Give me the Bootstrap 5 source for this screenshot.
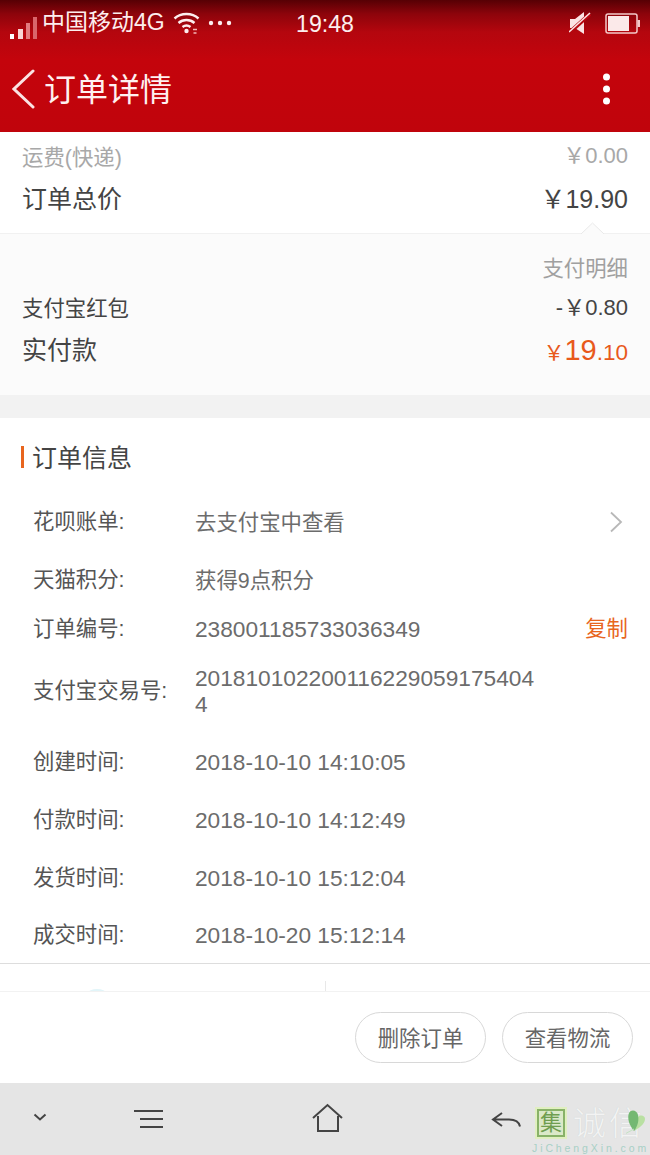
<!DOCTYPE html>
<html lang="zh-CN">
  <head>
    <meta charset="UTF-8" />
    <meta name="viewport" content="width=device-width, initial-scale=1.0" />
    <title>订单详情</title>
    <link href="https://cdn.jsdelivr.net/npm/bootstrap@5.3.0/dist/css/bootstrap.min.css" rel="stylesheet" />
    <style>
      body { width: 650px; height: 1155px; overflow: hidden; background: #fff; color: #444; position: relative;
        font-family: "Liberation Sans", "Noto Sans CJK SC", sans-serif; font-size: 21.4px; line-height: 1.2; }
      .top-red { height: 132px; background: linear-gradient(180deg, #560004 0, #8d040b 14px, #b4060e 32px, #c4040c 60px, #c0040c 100%); color: #fdeeee; }
      .status-row { height: 46px; padding: 0 10px 0 10px; font-size: 23px; }
      .status-right { gap: 14px; }
      .status-time { position: absolute; left: 0; right: 0; top: 11px; text-align: center; font-size: 23.2px; }
      .head-row { height: 86px; padding: 0 39px 0 12px; }
      .head-title { font-size: 32px; margin-left: 8px; margin-top: 2px; color: #fff0f0; }
      .fee-block { height: 102px; border-bottom: 1px solid #f1f1f1; padding: 14px 22px 0; }
      .fee-line { height: 25px; color: #a8a8a8; }
      .total-line { height: 30px; margin-top: 13px; font-size: 25px; color: #444; }
      .pay-block { height: 161px; background: #fbfbfb; padding: 23px 22px 0; position: relative; }
      .pay-arrow { position: absolute; right: 46px; top: -12px; width: 23px; height: 12px; }
      .pay-title { height: 26px; text-align: right; color: #a0a0a0; }
      .pay-line { height: 26px; margin-top: 14px; }
      .real-line { height: 32px; margin-top: 11px; font-size: 25px; }
      .amt-small { font-size: 22px; margin-bottom: 4px; }
      .price-big { color: #e8591c; font-size: 21px; display: flex; align-items: baseline; }
      .price-big b { font-weight: 400; font-size: 29px; }
      .price-big i { font-style: normal; font-size: 22.5px; }
      .grey-gap { height: 23px; background: #f2f2f2; }
      .info-title { height: 30px; margin: 25px 0 0 21px; padding-left: 11px; font-size: 25px; display: flex; align-items: center; position: relative; }
      .info-title::before { content: ""; position: absolute; left: 0; top: 3px; width: 3px; height: 22px; background: #e8651e; }
      .info-list { margin-top: 20px; }
      .info-row { display: flex; align-items: center; height: 58px; padding: 0 23px 0 33px; }
      .row-short { height: 40px; }
      .row-tall { height: 84px; }
      .row-last { height: 56px; }
      .info-key { width: 162px; flex: none; color: #555; margin-top: 2px; }
      .info-val { color: #6c6c6c; line-height: 26px; max-width: 345px; word-break: break-all; margin-top: 1px; }
      .num-val { font-size: 22.7px; margin-top: 0; }
      .copy-link { color: #e8651e; margin-left: auto; margin-right: -1px; margin-top: 2px; }
      .strip { height: 29px; border-top: 1px solid #ddd; border-bottom: 1px solid #f2f2f2; position: relative; overflow: hidden; }
      .strip-div { position: absolute; left: 325px; top: 17px; width: 1px; height: 12px; background: #e8e8e8; }
      .strip-dot { position: absolute; left: 88px; top: 25px; width: 18px; height: 8px; border-radius: 50%; background: #e2f5f9; }
      .foot-bar { height: 91px; padding: 20px 17px 0 0; gap: 16px; }
      .pill-btn { width: 131px; height: 51px; border: 1px solid #d8d8d8; border-radius: 26px; padding: 3px 0 0; font-size: 21.4px; color: #666; background: #fff; }
      .nav-bar { height: 72px; background: #e5e5e5; position: relative; }
      .nav-ico { position: absolute; top: 0; }
      .mark-wrap { position: absolute; left: 533px; top: 1106px; width: 117px; height: 49px; }
      .mark-box { position: absolute; left: 4px; top: 3px; width: 28px; height: 28px; background: #dbe9c8; border: 2px solid #88b268; outline: 2px solid #e0efc0; color: #6f9e50; font-size: 22px; line-height: 24px; text-align: center; }
      .mark-cn { position: absolute; left: 40px; top: 0; font-size: 33px; line-height: 35px; color: #f3f3f3; white-space: nowrap; letter-spacing: 3px; font-weight: 300; text-shadow: 0 0 1px #c8d0d0; }
      .mark-en { position: absolute; left: -1px; top: 36px; font-size: 10.500px; line-height: 13px; letter-spacing: 2.900px; color: #a8d0c6; white-space: nowrap; }
      .mark-heart { position: absolute; left: 93px; top: 3px; }
    </style>
  </head>

  <body>
    <div class="top-red">
      <div class="status-row d-flex align-items-center">
        <svg width="28" height="34" viewBox="0 0 28 34">
          <rect x="0" y="28" width="4" height="5" fill="#fff"/>
          <rect x="8" y="23" width="5" height="10" fill="#f8d5d5"/>
          <rect x="16" y="17" width="4" height="16" fill="#e27b7f"/>
          <rect x="23" y="11" width="4" height="22" fill="#d9666b"/>
        </svg>
        <span class="ms-1">中国移动4G</span>
        <svg width="27" height="24" viewBox="0 0 27 24" fill="none" stroke="#fdeeee" stroke-width="2.4" class="status-wifi ms-2">
          <path d="M1.5 7.5C8 1.5 19 1.5 25.500 7.500"/>
          <path d="M5.500 12C10 8 17 8 21.500 12"/>
          <path d="M9.500 16C11.800 14.200 15.200 14.200 17.500 16"/>
          <circle cx="13.500" cy="20" r="2.200" fill="#fdeeee" stroke="none"/>
          <path d="M20 18.500h4M20.500 22h3" stroke-width="1.500" stroke="#f2b8b8"/>
        </svg>
        <svg class="ms-2" width="24" height="6" viewBox="0 0 24 6" fill="#fdeeee">
          <circle cx="3" cy="3" r="2.200"/><circle cx="12" cy="3" r="2.200"/><circle cx="21" cy="3" r="2.200"/>
        </svg>
        <div class="ms-auto d-flex align-items-center status-right">
          <svg width="22" height="24" viewBox="0 0 22 24" fill="#fbe3e3">
            <path d="M1 8h5l9-7v22l-9-6H1z"/>
            <path d="M0 22L21 3" stroke="#b5060e" stroke-width="4"/>
            <path d="M0 21L21 2" stroke="#fbe3e3" stroke-width="1.600"/>
          </svg>
          <svg width="35" height="22" viewBox="0 0 35 22">
            <rect x="1" y="2" width="31" height="19" rx="2" fill="none" stroke="#f4c9c9" stroke-width="1.500"/>
            <rect x="3" y="4" width="21" height="15" fill="#fbe9e9"/>
            <rect x="32.500" y="8" width="2.500" height="7" fill="#f4c9c9"/>
          </svg>
        </div>
      </div>
      <div class="status-time">19:48</div>
      <div class="head-row d-flex align-items-center">
        <svg width="24" height="40" viewBox="0 0 24 40" fill="none" stroke="#fbe3e3" stroke-width="3" stroke-linecap="round"><path d="M21 2L2 20l19 18"/></svg>
        <span class="head-title">订单详情</span>
        <svg class="ms-auto" width="9" height="32" viewBox="0 0 9 32" fill="#fff">
          <circle cx="4.500" cy="4" r="3.500"/><circle cx="4.500" cy="16" r="3.500"/><circle cx="4.500" cy="28" r="3.500"/>
        </svg>
      </div>
    </div>

    <div class="fee-block">
      <div class="fee-line d-flex justify-content-between align-items-center"><span>运费(快递)</span><span class="amt-small">￥0.00</span></div>
      <div class="total-line d-flex justify-content-between align-items-center"><span>订单总价</span><span>￥19.90</span></div>
    </div>

    <div class="pay-block">
      <svg class="pay-arrow" viewBox="0 0 23 12"><path d="M0 12L11.500 1 23 12" fill="#fbfbfb" stroke="#e9e9e9"/></svg>
      <div class="pay-title">支付明细</div>
      <div class="pay-line d-flex justify-content-between align-items-center"><span>支付宝红包</span><span class="amt-small">-￥0.80</span></div>
      <div class="real-line d-flex justify-content-between align-items-center"><span>实付款</span><span class="price-big">￥<b>19</b><i>.10</i></span></div>
    </div>

    <div class="grey-gap"></div>

    <div class="info-title">订单信息</div>

    <div class="info-list">
      <div class="info-row">
        <span class="info-key">花呗账单:</span><span class="info-val">去支付宝中查看</span>
        <svg class="ms-auto me-1" width="14" height="22" viewBox="0 0 14 22" fill="none" stroke="#b8b8b8" stroke-width="1.800"><path d="M2 1.500L12 11 2 20.500"/></svg>
      </div>
      <div class="info-row"><span class="info-key">天猫积分:</span><span class="info-val">获得9点积分</span></div>
      <div class="info-row row-short"><span class="info-key">订单编号:</span><span class="info-val num-val">238001185733036349</span><span class="copy-link">复制</span></div>
      <div class="info-row row-tall"><span class="info-key">支付宝交易号:</span><span class="info-val num-val">2018101022001162290591754044</span></div>
      <div class="info-row"><span class="info-key">创建时间:</span><span class="info-val num-val">2018-10-10 14:10:05</span></div>
      <div class="info-row"><span class="info-key">付款时间:</span><span class="info-val num-val">2018-10-10 14:12:49</span></div>
      <div class="info-row"><span class="info-key">发货时间:</span><span class="info-val num-val">2018-10-10 15:12:04</span></div>
      <div class="info-row row-last"><span class="info-key">成交时间:</span><span class="info-val num-val">2018-10-20 15:12:14</span></div>
    </div>

    <div class="strip"><div class="strip-dot"></div><div class="strip-div"></div></div>

    <div class="foot-bar d-flex justify-content-end">
      <button type="button" class="btn pill-btn">删除订单</button>
      <button type="button" class="btn pill-btn">查看物流</button>
    </div>

    <div class="nav-bar">
      <svg class="nav-ico" width="650" height="72" viewBox="0 0 650 72" fill="none" stroke="#444" stroke-width="2">
        <path d="M34.500 31.500L40 36.500 45.500 31.500"/>
        <path d="M134 28h29M140 36h23M140 44h23" stroke-width="2.200"/>
        <path d="M313 35L327.500 22 342 35M318 33v15h20V33" stroke-width="2"/>
        <path d="M502 30L493 36.500 502 43M493 36.500h16c6 0 10 2 11 7"/>
      </svg>
    </div>

    <div class="mark-wrap">
      <div class="mark-box">集</div>
      <div class="mark-cn">诚信</div>
      <svg class="mark-heart" width="20" height="26" viewBox="0 0 20 26">
        <path d="M8 22C13 19 19 15 19 10c0-3-4-5-7-2z" fill="#b9e0a2"/>
        <path d="M8 22C3 16 1 9 3 4c2-4 8-3 9 2 1 5 0 11-4 16z" fill="#74b872"/>
        <path d="M-3 26L8 20" stroke="#c4e2c4" stroke-width="1"/>
      </svg>
      <div class="mark-en">JiChengXin.com</div>
    </div>

    <script src="https://cdn.jsdelivr.net/npm/bootstrap@5.3.0/dist/js/bootstrap.bundle.min.js"></script>
  </body>
</html>
